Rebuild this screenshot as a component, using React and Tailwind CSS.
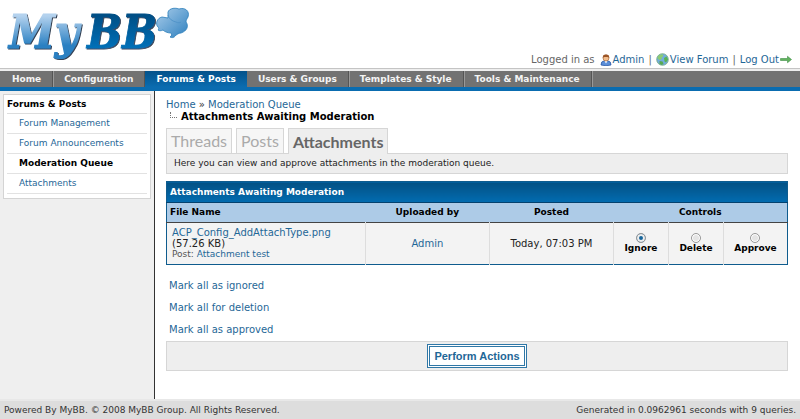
import React from "react";

const menu = [
  { label: "Home" },
  { label: "Configuration" },
  { label: "Forums & Posts", active: true },
  { label: "Users & Groups" },
  { label: "Templates & Style" },
  { label: "Tools & Maintenance" },
];

const sections = [
  { label: "Forum Management" },
  { label: "Forum Announcements" },
  { label: "Moderation Queue", active: true },
  { label: "Attachments" },
];

function Logo() {
  return (
    <svg width="200" height="68" viewBox="0 0 200 68" role="img" aria-label="MyBB" className="block">
      <defs>
        <linearGradient id="light" x1="0" y1="0" x2="0" y2="1">
          <stop offset="0.2" stopColor="#b4d2ee" />
          <stop offset="0.75" stopColor="#2a80c2" />
        </linearGradient>
        <linearGradient id="dark" x1="0" y1="0" x2="0" y2="1">
          <stop offset="0.2" stopColor="#034f86" />
          <stop offset="0.8" stopColor="#0470b8" />
        </linearGradient>
        <linearGradient id="bubble" x1="0" y1="0" x2="1" y2="1">
          <stop offset="0" stopColor="#aacdea" />
          <stop offset="1" stopColor="#2e80bf" />
        </linearGradient>
        <filter id="shade" x="-10%" y="-10%" width="120%" height="130%">
          <feDropShadow dx="1" dy="1" stdDeviation="0.7" floodColor="#1c2f42" floodOpacity="0.9" />
        </filter>
      </defs>
      <g fontFamily="'DejaVu Serif Condensed', 'DejaVu Serif', serif" fontWeight="bold" fontStyle="italic" fontSize="46" filter="url(#shade)">
        <text x="9" y="48" fill="url(#light)" stroke="url(#light)" strokeWidth="1.2">My</text>
        <text x="87" y="48" fill="url(#dark)" stroke="url(#dark)" strokeWidth="0.8">BB</text>
      </g>
      <path
        d="M168 14C167 9 174 7 179 9C185 7 190 11 188 17C187 19 186 20 186 22C189 26 187 31 181 33C179 33 178 34 176 35C174 38 172 38 170 37C172 36 172 34 171 33C168 33 165 32 163 30C161 31 159 31 158 30C159 29 159 28 158 27C155 24 157 18 162 17C164 17 166 18 168 18Z"
        fill="url(#bubble)"
        stroke="#2a7dba"
        strokeWidth="0.8"
      />
      <path d="M168 15C169 19 172 21 176 22M176 22C178 23 180 23 181 22" fill="none" stroke="#4c91c7" strokeWidth="0.8" />
    </svg>
  );
}

function UserIcon() {
  return (
    <svg width="12" height="12" viewBox="0 0 12 12" aria-hidden="true">
      <path d="M1 11Q1 7 4 7H8Q11 7 11 11Q6 12.500 1 11Z" fill="#5c8fd8" stroke="#2c5aa8" strokeWidth="0.8" />
      <path d="M4.500 7L6 9.500L7.500 7Z" fill="#fff" />
      <circle cx="6" cy="4" r="3" fill="#f2bd8d" stroke="#9a5a2c" strokeWidth="0.6" />
      <path d="M2.800 4Q2.500 0.500 6 0.600Q9.500 0.500 9.200 4Q8.500 2.500 6 3Q3.500 2.500 2.800 4Z" fill="#9c5526" />
    </svg>
  );
}

function GlobeIcon() {
  return (
    <svg width="13" height="13" viewBox="0 0 13 13" aria-hidden="true">
      <circle cx="6.500" cy="6.500" r="5.800" fill="#72acde" stroke="#6ca77c" strokeWidth="0.8" />
      <path d="M1.500 4Q3 1 6.500 1.200L7.500 3L5.500 4.500L6 6L3.500 7L2 6Z" fill="#8ccb72" />
      <path d="M8 5L10.500 3.500L12 6.500L10 9.500L8.500 8.500Z" fill="#5bb34f" />
      <path d="M3.500 8L6.500 8.500L7.500 10.500L6 12L3.500 11Z" fill="#58ab50" />
    </svg>
  );
}

function ArrowIcon() {
  return (
    <svg width="12" height="9" viewBox="0 0 12 9" aria-hidden="true">
      <path d="M0.500 3.500H7.500V1.300L11.500 4.500L7.500 7.700V5.500H0.500Z" fill="#63b35e" stroke="#3e8d46" strokeWidth="0.6" />
    </svg>
  );
}

const link = "text-[#1f6797] hover:underline";

function Header() {
  return (
    <header className="flex items-end justify-between bg-white">
      <a href="#"><Logo /></a>
      <div className="flex items-center gap-1 pr-2 pb-[2px] text-[10px] leading-[12px] text-[#666]">
        <span>Logged in as</span>
        <a href="#" className={"ml-px flex items-center gap-px " + link}><UserIcon />Admin</a>
        <span>|</span>
        <a href="#" className={"flex items-center gap-px " + link}><GlobeIcon />View Forum</a>
        <span>|</span>
        <a href="#" className={"flex items-center gap-px " + link}>Log Out<ArrowIcon /></a>
      </div>
    </header>
  );
}

function Menu() {
  return (
    <nav className="border-t border-[#c4c4c4] bg-[#eee] pt-[2px]">
      <ul className="flex h-5 border-b-4 border-[#0a6cb0] bg-[#727272] pl-px text-[9px] leading-4 font-bold">
        {menu.map((m) => (
          <li key={m.label} className="flex">
            <a
              href="#"
              aria-current={m.active ? "page" : undefined}
              className={
                m.active
                  ? "bg-linear-to-b from-[#04528a] to-[#0a6cb0] px-[11px] text-white"
                  : "border-r border-[#555] px-[11px] text-[#f4f4f4] shadow-[1px_0_0_#999]"
              }
            >
              {m.label}
            </a>
          </li>
        ))}
      </ul>
    </nav>
  );
}

function Sidebar() {
  return (
    <aside className="w-[155px] shrink-0 border-r border-[#333] bg-[#efefef] p-[3px]">
      <div className="border border-[#d4d4d4] bg-white px-[3px] pb-1">
        <h2 className="border-b border-[#ddd] text-[9px] leading-[18px] font-bold text-black">Forums &amp; Posts</h2>
        <ul className="text-[9px] leading-[19px]">
          {sections.map((s) => (
            <li key={s.label} className="border-b border-[#e2e2e2] pl-3">
              <a href="#" className={s.active ? "font-bold text-black" : link}>{s.label}</a>
            </li>
          ))}
        </ul>
      </div>
    </aside>
  );
}

function Tabs() {
  const idle = "mr-1 h-[25px] border border-b-0 border-[#d6d6d6] bg-[#f6f6f6] px-1 leading-[22px] text-[#aaa]";
  return (
    <section className="mt-[6px]">
      <div role="tablist" className="flex items-start font-['Lato',sans-serif] text-[16px]">
        <button role="tab" aria-selected="false" className={idle}>Threads</button>
        <button role="tab" aria-selected="false" className={idle}>Posts</button>
        <button
          role="tab"
          aria-selected="true"
          className="z-10 -mb-px h-[26px] border border-b-0 border-[#d6d6d6] bg-[#eee] px-1 leading-[26px] font-bold text-[#666]"
        >
          Attachments
        </button>
      </div>
      <p className="border border-[#d6d6d6] bg-[#eee] px-[7px] text-[9px] leading-[19px] text-[#222]">
        Here you can view and approve attachments in the moderation queue.
      </p>
    </section>
  );
}

function Choice({ label, checked }) {
  return (
    <td className="border-l border-[#ddd] px-0 py-[3px]">
      <label className="flex flex-col items-center text-[9px] font-bold text-black">
        <input
          type="radio"
          name="choice"
          defaultChecked={checked}
          className="size-[10px] appearance-none rounded-full border border-[#999] bg-[#e4e4e4] shadow-[inset_0_0_0_1px_#fff] checked:bg-[#17659b] checked:shadow-[inset_0_0_0_2px_#eee]"
        />
        {label}
      </label>
    </td>
  );
}

function Queue() {
  return (
    <table className="mt-[7px] w-full table-fixed border-collapse border border-[#0f5c8e] text-center text-[10px] leading-[11px] text-[#222]">
      <colgroup>
        <col className="w-[32%]" />
        <col className="w-[20%]" />
        <col />
        <col className="w-[55px]" />
        <col className="w-[55px]" />
        <col className="w-[64px]" />
      </colgroup>
      <thead className="text-black">
        <tr>
          <th
            colSpan="6"
            className="border-b border-[#04416e] bg-linear-to-b from-[#035184] to-[#026cb1] px-[3px] text-left text-[9px] leading-[20px] text-white"
          >
            Attachments Awaiting Moderation
          </th>
        </tr>
        <tr className="border-b border-[#444] bg-[#adcbe7] text-[9px] leading-[19px]">
          <th className="px-[3px] text-left">File Name</th>
          <th>Uploaded by</th>
          <th>Posted</th>
          <th colSpan="3">Controls</th>
        </tr>
      </thead>
      <tbody className="bg-[#f3f3f3]">
        <tr>
          <td className="px-[5px] py-1 text-left">
            <a href="#" className={link}>ACP_Config_AddAttachType.png</a>
            <br />
            (57.26 KB)
            <div className="text-[9px] leading-[11px] text-[#555]">
              Post: <a href="#" className={link}>Attachment test</a>
            </div>
          </td>
          <td className="border-l border-[#ddd]"><a href="#" className={link}>Admin</a></td>
          <td className="border-l border-[#ddd]">Today, 07:03 PM</td>
          <Choice label="Ignore" checked />
          <Choice label="Delete" />
          <Choice label="Approve" />
        </tr>
      </tbody>
    </table>
  );
}

export default function App() {
  return (
    <div className="flex min-h-screen flex-col bg-white font-['DejaVu_Sans',Verdana,sans-serif]">
      <Header />
      <Menu />
      <div className="flex flex-1">
        <Sidebar />
        <main className="min-w-0 flex-1 pt-2 pr-3 pl-[11px]">
          <nav className="text-[10px] leading-[12px] text-[#333]">
            <a href="#" className={link}>Home</a> » <a href="#" className={link}>Moderation Queue</a>
            <div className="flex items-start gap-1 pl-1 font-bold text-black">
              <span className="mt-px h-[6px] w-[7px] border-b border-l border-dotted border-[#777]" />
              <span className="leading-[11px]">Attachments Awaiting Moderation</span>
            </div>
          </nav>
          <Tabs />
          <Queue />
          <ul className="mt-[10px] px-[3px] text-[10px] leading-[22px]">
            <li><a href="#" className={link}>Mark all as ignored</a></li>
            <li><a href="#" className={link}>Mark all for deletion</a></li>
            <li><a href="#" className={link}>Mark all as approved</a></li>
          </ul>
          <div className="flex justify-center border border-[#d6d6d6] bg-[#eee] py-[2px]">
            <button className="border-3 border-double border-[#2f77a6] bg-white px-[4px] font-['Liberation_Sans',Arial,sans-serif] text-[11px] leading-[18px] font-bold text-[#1f6797]">
              Perform Actions
            </button>
          </div>
        </main>
      </div>
      <footer className="flex justify-between border-t-2 border-[#e8e8e8] bg-[#ddd] px-1 text-[9px] leading-[18px] text-[#333]">
        <span>Powered By MyBB. © 2008 MyBB Group. All Rights Reserved.</span>
        <span>Generated in 0.0962961 seconds with 9 queries.</span>
      </footer>
    </div>
  );
}
